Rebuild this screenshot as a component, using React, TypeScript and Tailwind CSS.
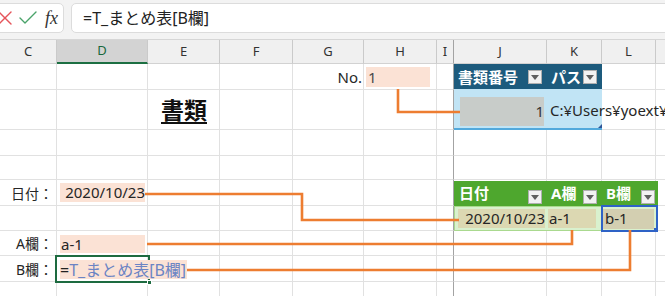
import { X, Check } from 'lucide-react'

const colStart = ['col-start-1', 'col-start-2', 'col-start-3', 'col-start-4', 'col-start-5', 'col-start-6', 'col-start-7', 'col-start-8', 'col-start-9', 'col-start-10', 'col-start-11']
const rowStart = ['row-start-1', 'row-start-2', 'row-start-3', 'row-start-4', 'row-start-5', 'row-start-6', 'row-start-7', 'row-start-8', 'row-start-9', 'row-start-10']
const letters = ['C', 'D', 'E', 'F', 'G', 'H', 'I', 'J', 'K', 'L', '']

function Dropdown({ className = '' }: { className?: string }) {
  return (
    <div className={`w-[14px] h-[14px] shrink-0 bg-[#f2f2f2] border border-[#b0b0b0] flex items-center justify-center ${className}`}>
      <svg width="8" height="5" viewBox="0 0 8 5">
        <path d="M0 0h8L4 5z" fill="#5f5f5f" />
      </svg>
    </div>
  )
}

function FormulaBar() {
  return (
    <div className="h-[40px] bg-[#f3f3f3] border-b border-[#d6d6d6] flex items-start pt-[3px] gap-[7px]">
      <div className="-ml-[8px] w-[72px] h-[30px] shrink-0 bg-white border border-[#dcdcdc] rounded-[5px] flex items-center pl-0">
        <X size={24} strokeWidth={1.4} className="shrink-0 text-[#e5545a]" />
        <Check size={24} strokeWidth={1.4} className="shrink-0 -ml-[1px] text-[#4aa36a]" />
        <span className="ml-[5px] font-['Liberation_Serif',serif] italic text-[18px] text-[#333] leading-none">fx</span>
      </div>
      <div className="flex-1 -mr-[10px] h-[30px] bg-white border border-[#dcdcdc] rounded-[5px] flex items-center pl-[11px] text-[16px] text-[#222]">
        =T_まとめ表[B欄]
      </div>
    </div>
  )
}

function Sheet() {
  const gridCells = []
  for (let r = 1; r < 10; r++) {
    for (let c = 0; c < 11; c++) {
      gridCells.push(
        <div
          key={`${r}-${c}`}
          className={`${colStart[c]} ${rowStart[r]} border-r border-b border-b-[#e1e1e1] ${c === 6 ? 'border-r-[#a3a3a3]' : 'border-r-[#e1e1e1]'}`}
        />
      )
    }
  }

  return (
    <div className="grid grid-cols-[57px_91px_72px_73px_71px_73px_17px_93px_55px_54px_80px] grid-rows-[24px_26px_40px_26px_24px_26px_25px_25px_26px_26px] text-[15px] text-[#262626]">
      {letters.map((l, c) => (
        <div
          key={l + c}
          className={`${colStart[c]} row-start-1 flex items-center justify-center text-[13px] border-r ${c === 6 ? 'border-r-[#a3a3a3]' : 'border-r-[#cacaca]'} ${c === 1 ? 'bg-[#d3d3d3] text-[#17683b] border-b-2 border-b-[#1c6f42]' : 'bg-[#f0f0f0] text-[#333] border-b border-b-[#d2d2d2]'}`}
        >
          {l}
        </div>
      ))}
      {gridCells}

      {/* row 1 */}
      <div className="col-start-5 row-start-2 flex items-center justify-end pr-[2px]">No.</div>
      <div className="col-start-6 row-start-2 self-start mt-[3px] ml-[2px] w-[64px] h-[20px] bg-[#fbe2d5] flex items-center pl-[2px] text-[#4a4a4a]">1</div>
      <div className="col-start-8 col-span-2 row-start-2 bg-[#1d5b7d] grid grid-cols-[93px_55px] text-white font-bold text-[15px]">
        <div className="flex items-center justify-between pl-[4px] pr-[5px]">
          <span>書類番号</span>
          <Dropdown />
        </div>
        <div className="flex items-center justify-between pl-[4px] pr-[5px]">
          <span>パス</span>
          <Dropdown />
        </div>
      </div>

      {/* row 2 */}
      <div className="col-start-3 row-start-3 flex items-center justify-center text-[23px] font-bold underline underline-offset-[3px] text-[#111]">書類</div>
      <div className="relative col-start-8 col-span-2 row-start-3 -mt-[1px] bg-[#c1e4f5] border-b-2 border-[#52a9dc]">
        <div className="ml-[6px] mt-[8px] w-[84px] h-[29px] bg-[#c8ccc9] flex items-center justify-end text-[#333]">1</div>
        <svg className="absolute right-0 bottom-0" width="4" height="4" viewBox="0 0 4 4">
          <path d="M4 0v4H0z" fill="#2f5597" />
        </svg>
      </div>
      <div className="col-start-9 col-span-3 row-start-3 z-10 flex items-center pl-[3px] whitespace-nowrap text-[15px] text-[#262626]">C:¥Users¥yoext¥</div>

      {/* row 5 */}
      <div className="col-start-1 row-start-6 flex items-center justify-end pr-[4px] text-[14px]">日付：</div>
      <div className="col-start-2 row-start-6 self-start mt-[3px] ml-[3px] w-[85px] h-[19px] bg-[#fbe2d5] flex items-center justify-end">2020/10/23</div>
      <div className="col-start-8 col-span-3 row-start-6 w-[204px] mt-[1px] bg-[#4ea72e] grid grid-cols-[93px_55px_56px] text-white font-bold text-[15px]">
        <div className="flex justify-between items-center pl-[5px] pr-[5px]">
          <span>日付</span>
          <Dropdown className="self-end mb-[2px]" />
        </div>
        <div className="flex justify-between items-center pl-[4px] pr-[5px]">
          <span>A欄</span>
          <Dropdown className="self-end mb-[2px]" />
        </div>
        <div className="flex justify-between items-center pl-[4px] pr-[3px]">
          <span>B欄</span>
          <Dropdown className="self-end mb-[2px]" />
        </div>
      </div>

      {/* row 6 */}
      <div className="col-start-8 col-span-3 row-start-7 w-[204px] bg-[#d9f1ce] border border-[#aad98f] grid grid-cols-[92px_55px_55px]">
        <div className="ml-[3px] w-[87px] h-[19px] self-center bg-[#dcd8b2] flex items-center justify-end">2020/10/23</div>
        <div className="ml-[1px] w-[48px] h-[19px] self-center bg-[#dcd8b2] flex items-center pl-[1px]">a-1</div>
        <div className="ml-[1px] w-[51px] h-[20px] self-center bg-[#d3cfb1] flex items-center pl-[2px]">b-1</div>
      </div>
      <div className="relative col-start-10 row-start-7 -ml-[1px] -mt-[1px] w-[57px] h-[27px] border-2 border-[#2e62c6] z-10">
        <div className="absolute right-[-2px] bottom-[-2px] w-[4px] h-[4px] bg-[#2e62c6]" />
      </div>

      {/* row 7 */}
      <div className="col-start-1 row-start-8 flex items-center justify-end pr-[4px] text-[14px]">A欄：</div>
      <div className="col-start-2 row-start-8 self-start mt-[4px] ml-[3px] w-[85px] h-[18px] bg-[#fbe2d5] flex items-center pl-[1px]">a-1</div>

      {/* row 8 */}
      <div className="col-start-1 row-start-9 flex items-center justify-end pr-[4px] text-[14px]">B欄：</div>
      <div className="relative col-start-2 row-start-9 -ml-[2px] -mt-[1px] w-[95px] h-[28px] border-2 border-[#1d6b40] z-10">
        <div className="absolute right-[-4px] bottom-[-4px] w-[5px] h-[5px] bg-[#1d6b40] border border-white" />
      </div>
      <div className="col-start-2 col-span-2 row-start-9 self-start mt-[4px] ml-[3px] w-[127px] h-[19px] bg-[#fbe2d5] flex items-center whitespace-nowrap text-[16px] z-20">
        <span className="text-[#222]">=</span>
        <span className="text-[#6b84c4]">T_まとめ表[B欄]</span>
      </div>
    </div>
  )
}

function Connectors() {
  return (
    <svg className="absolute left-0 top-0 pointer-events-none z-30" width="665" height="296" viewBox="0 0 665 296">
      <g fill="none" stroke="#ed7d31" strokeWidth="2.6">
        <path d="M398 89V112H460" />
        <path d="M145 194H302V220H459" />
        <path d="M147 244H572V230" />
        <path d="M187 270H630V230" />
      </g>
    </svg>
  )
}

export default function App() {
  return (
    <div className="relative w-[665px] h-[296px] overflow-hidden bg-white font-['Noto_Sans','Noto_Sans_CJK_JP',sans-serif]">
      <FormulaBar />
      <Sheet />
      <Connectors />
    </div>
  )
}
